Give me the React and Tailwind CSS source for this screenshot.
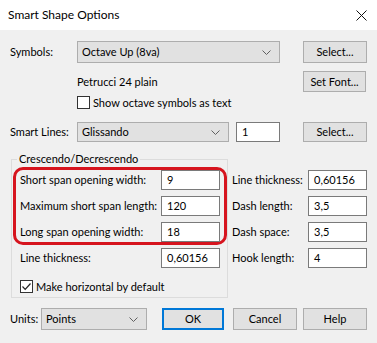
const font = { fontFamily: "Lato, 'Noto Sans', sans-serif" };

function Chevron() {
  return (
    <svg width="9" height="5" viewBox="0 0 9 5" className="shrink-0">
      <path d="M0.5 0.5 L4.5 4.5 L8.5 0.5" fill="none" stroke="#606060" strokeWidth="1" />
    </svg>
  );
}

function Combo({ value, className = "" }) {
  return (
    <div
      className={`flex items-center justify-between border border-[#adadad] bg-[#e1e1e1] pl-[4px] pr-[8px] ${className}`}
    >
      <span>{value}</span>
      <Chevron />
    </div>
  );
}

function Btn({ children, className = "", primary = false }) {
  return (
    <div
      className={`flex items-center justify-center bg-[#e1e1e1] ${
        primary ? "border-2 border-[#0078d7]" : "border border-[#adadad]"
      } ${className}`}
    >
      {children}
    </div>
  );
}

function Field({ value, className = "" }) {
  return (
    <div
      className={`flex h-[20px] w-[59px] items-center border border-[#7a7a7a] bg-white pl-[5px] ${className}`}
    >
      {value}
    </div>
  );
}

function Check({ checked }) {
  return (
    <div className="flex size-[13px] shrink-0 items-center justify-center border border-[#333333] bg-white">
      {checked ? (
        <svg width="11" height="11" viewBox="0 0 11 11">
          <path d="M1.5 5.5 L4.2 8.3 L9.5 2.5" fill="none" stroke="#222" strokeWidth="1.2" />
        </svg>
      ) : null}
    </div>
  );
}

function Row({ label, value, className = "" }) {
  return (
    <div className={`flex h-[20px] items-center justify-between ${className}`}>
      <span>{label}</span>
      <Field value={value} />
    </div>
  );
}

export default function App() {
  return (
    <div
      className="h-[343px] w-[377px] overflow-hidden whitespace-nowrap bg-[#f0f0f0] text-[11px] leading-[16px] text-black"
      style={font}
    >
      {/* title bar */}
      <div className="flex h-[30px] items-center justify-between bg-white pl-[8px] pr-[10px]">
        <span className="text-[12px]">Smart Shape Options</span>
        <svg width="11" height="11" viewBox="0 0 11 11">
          <path d="M0.5 0.5 L10.5 10.5 M10.5 0.5 L0.5 10.5" stroke="#111" strokeWidth="1" />
        </svg>
      </div>

      <div className="px-[10px] pt-[11px]">
        <div className="flex h-[22px] items-center">
          <span className="w-[67px]">Symbols:</span>
          <Combo value="Octave Up (8va)" className="h-[22px] w-[203px]" />
          <Btn className="ml-[23px] h-[22px] w-[64px]">Select...</Btn>
        </div>

        <div className="mt-[8px] flex h-[21px] items-center">
          <span className="w-[293px] pl-[67px]">Petrucci 24 plain</span>
          <Btn className="h-[21px] w-[63px]">Set Font...</Btn>
        </div>

        <div className="mt-[4px] flex h-[13px] items-center pl-[67px]">
          <Check />
          <span className="ml-[3px]">Show octave symbols as text</span>
        </div>

        <div className="mt-[13px] flex h-[20px] items-center">
          <span className="w-[67px]">Smart Lines:</span>
          <Combo value="Glissando" className="h-[20px] w-[152px]" />
          <div className="ml-[7px] flex h-[20px] w-[44px] items-center border border-[#7a7a7a] bg-white pl-[5px]">
            1
          </div>
          <Btn className="ml-[23px] h-[20px] w-[64px]">Select...</Btn>
        </div>

        <div className="mt-[9px] flex">
          <fieldset className="ml-[1px] w-[217px] min-w-0 border border-[#dcdcdc] pb-[4px] pl-[1px]">
            <legend className="ml-[4px] px-[2px] leading-[16px]">Crescendo/Decrescendo</legend>
            <div className="flex flex-col gap-[6px] rounded-[10px] border-[3px] border-[#d6141e] px-[4px]">
              <Row label="Short span opening width:" value="9" />
              <Row label="Maximum short span length:" value="120" />
              <Row label="Long span opening width:" value="18" />
            </div>
            <Row label="Line thickness:" value="0,60156" className="mt-[3px] px-[7px]" />
            <div className="mt-[12px] flex h-[13px] items-center pl-[7px]">
              <Check checked />
              <span className="ml-[3px]">Make horizontal by default</span>
            </div>
          </fieldset>

          <div className="ml-[4px] flex w-[135px] flex-col gap-[6px] pt-[19px]">
            <Row label="Line thickness:" value="0,60156" />
            <Row label="Dash length:" value="3,5" />
            <Row label="Dash space:" value="3,5" />
            <Row label="Hook length:" value="4" />
          </div>
        </div>

        <div className="mt-[10px] flex h-[22px] items-center">
          <span className="w-[31px]">Units:</span>
          <Combo value="Points" className="h-[22px] w-[106px]" />
          <Btn primary className="ml-[15px] h-[22px] w-[62px]">OK</Btn>
          <Btn className="ml-[9px] h-[22px] w-[64px]">Cancel</Btn>
          <Btn className="ml-[6px] h-[22px] w-[64px]">Help</Btn>
        </div>
      </div>
    </div>
  );
}
